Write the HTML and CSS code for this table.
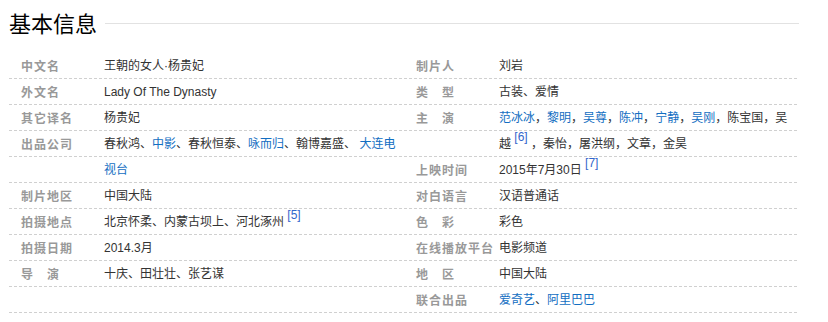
FILE: index.html
```html
<!DOCTYPE html>
<html lang="zh-CN">
<head>
<meta charset="utf-8">
<title>基本信息</title>
<link rel="stylesheet" href="styles.css">
</head>
<body>
<div class="card">
  <div class="title-bar">
    <h2 class="title">基本信息</h2>
    <div class="title-rule"></div>
  </div>
  <div class="info">
    <dl class="col">
      <div class="row"><dt class="label">中文名</dt><dd class="value">王朝的女人·杨贵妃</dd></div>
      <div class="row"><dt class="label">外文名</dt><dd class="value">Lady Of The Dynasty</dd></div>
      <div class="row"><dt class="label">其它译名</dt><dd class="value">杨贵妃</dd></div>
      <div class="row"><dt class="label">出品公司</dt><dd class="value">春秋鸿、<a class="link">中影</a>、春秋恒泰、<a class="link">咏而归</a>、翰博嘉盛、 <a class="link">大连电视台</a></dd></div>
      <div class="row"><dt class="label">制片地区</dt><dd class="value">中国大陆</dd></div>
      <div class="row"><dt class="label">拍摄地点</dt><dd class="value">北京怀柔、内蒙古坝上、河北涿州 <sup class="ref">[5]</sup></dd></div>
      <div class="row"><dt class="label">拍摄日期</dt><dd class="value">2014.3月</dd></div>
      <div class="row"><dt class="label">导　演</dt><dd class="value">十庆、田壮壮、张艺谋</dd></div>
    </dl>
    <dl class="col">
      <div class="row"><dt class="label">制片人</dt><dd class="value">刘岩</dd></div>
      <div class="row"><dt class="label">类　型</dt><dd class="value">古装、爱情</dd></div>
      <div class="row"><dt class="label">主　演</dt><dd class="value"><a class="link">范冰冰</a>，<a class="link">黎明</a>，<a class="link">吴尊</a>，<a class="link">陈冲</a>，<a class="link">宁静</a>，<a class="link">吴刚</a>，陈宝国，吴越 <sup class="ref">[6]</sup> ，秦怡，屠洪纲，文章，金昊</dd></div>
      <div class="row"><dt class="label">上映时间</dt><dd class="value">2015年7月30日 <sup class="ref">[7]</sup></dd></div>
      <div class="row"><dt class="label">对白语言</dt><dd class="value">汉语普通话</dd></div>
      <div class="row"><dt class="label">色　彩</dt><dd class="value">彩色</dd></div>
      <div class="row"><dt class="label">在线播放平台</dt><dd class="value">电影频道</dd></div>
      <div class="row"><dt class="label">地　区</dt><dd class="value">中国大陆</dd></div>
      <div class="row"><dt class="label">联合出品</dt><dd class="value"><a class="link">爱奇艺</a>、<a class="link">阿里巴巴</a></dd></div>
    </dl>
  </div>
</div>
</body>
</html>
```
FILE: styles.css
```css
html, body {
  margin: 0;
  padding: 0;
  background: #fff;
}
body {
  font-family: "Liberation Sans", "Noto Sans CJK SC", sans-serif;
  font-size: 12px;
  color: #333;
}
.card {
  width: 790px;
  padding: 11px 0 0 9px;
}
.title-bar {
  display: flex;
  align-items: center;
  gap: 8px;
  height: 22px;
}
.title {
  margin: 0;
  font-family: "Noto Sans CJK SC", sans-serif;
  font-size: 22px;
  line-height: 22px;
  font-weight: normal;
  color: #000;
  white-space: nowrap;
}
.title-rule {
  flex: 1;
  height: 1px;
  background: #e2e2e2;
  margin-top: 3px;
}
.info {
  margin-top: 20px;
  display: flex;
  background-image: conic-gradient(at 3px 25px, transparent 0deg 180deg, #d0d0d0 180deg 270deg, transparent 270deg 360deg);
  background-size: 5px 26px;
  background-repeat: repeat;
}
.col {
  width: 395px;
  margin: 0;
  padding: 0;
}
.row {
  display: flex;
  line-height: 26px;
}
.label {
  width: 95px;
  box-sizing: border-box;
  padding-left: 12px;
  margin: 0;
  color: #999;
  font-weight: bold;
  letter-spacing: 1px;
  white-space: nowrap;
  font-family: "Noto Sans CJK SC", sans-serif;
}
.value {
  width: 292px;
  margin: 0;
  color: #333;
}
.link {
  color: #136ec2;
  text-decoration: none;
}
.ref {
  color: #3366cc;
  font-size: 12px;
  line-height: 0;
  vertical-align: 7px;
}
```
